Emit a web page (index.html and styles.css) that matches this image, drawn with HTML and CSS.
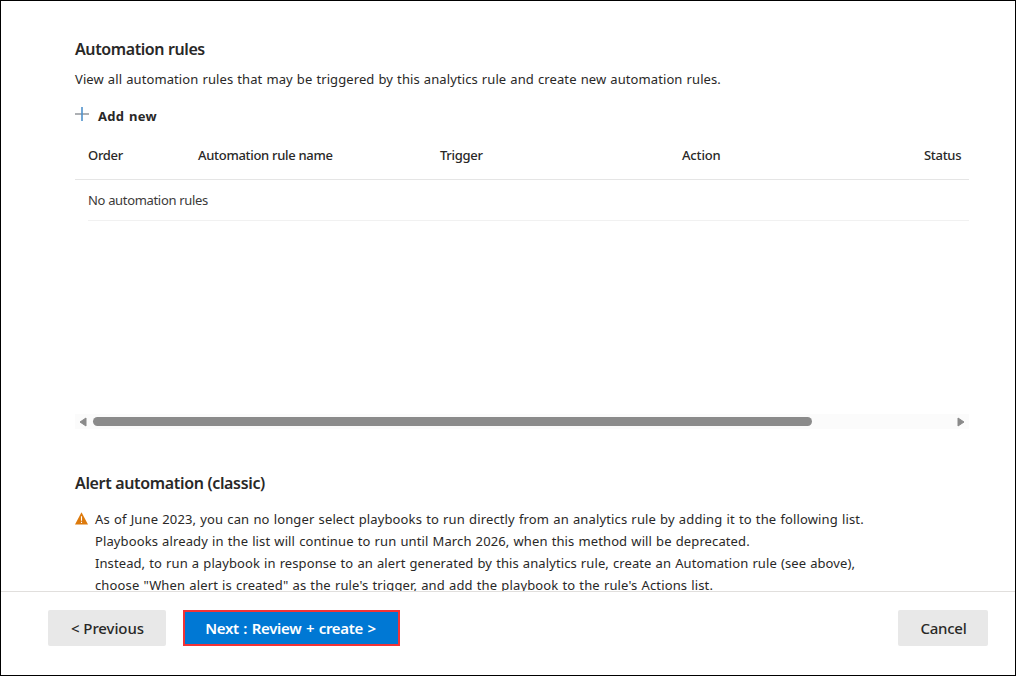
FILE: index.html
```html
<!DOCTYPE html>
<html lang="en">
<head>
<meta charset="utf-8">
<title>Automation rules</title>
<link rel="stylesheet" href="styles.css">
</head>
<body>
<div class="page">
  <main class="content">
    <h2 class="title"><span class="t-rules">Automation rules</span></h2>
    <p class="intro"><span>View all automation rules that may be triggered by this analytics rule and create new automation rules.</span></p>
    <button class="add">
      <svg class="plus" width="14" height="14" viewBox="0 0 14 14"><path d="M0 7h14" stroke="#999da2" stroke-width="1.6"/><path d="M7 0v14" stroke="#4f92cc" stroke-width="1.6"/></svg>
      <span class="add-label">Add new</span>
    </button>
    <section class="grid">
      <div class="head">
        <span>Order</span><span>Automation rule name</span><span>Trigger</span><span class="action">Action</span><span>Status</span>
      </div>
      <div class="empty"><span>No automation rules</span></div>
    </section>
    <div class="scrollbar">
      <svg width="8" height="10" viewBox="0 0 8 10"><path d="M7 1v8L1 5z" fill="#8a8a8a" stroke="#8a8a8a" stroke-linejoin="round"/></svg>
      <div class="track"><div class="thumb"></div></div>
      <svg width="8" height="10" viewBox="0 0 8 10"><path d="M1 1v8L7 5z" fill="#8a8a8a" stroke="#8a8a8a" stroke-linejoin="round"/></svg>
    </div>
    <h2 class="title classic">Alert automation (classic)</h2>
    <div class="notice">
      <svg class="warn" width="13" height="13" viewBox="0 0 13 13"><path d="M6.5 0.2L13 12.6H0z" fill="#dd7a0c"/><path d="M6.5 4.2v4.6M6.5 9.8v1.3" stroke="#fff" stroke-width="1.1"/></svg>
      <p class="lines"><span class="l1">As of June 2023, you can no longer select playbooks to run directly from an analytics rule by adding it to the following list.</span><span class="l2">Playbooks already in the list will continue to run until March 2026, when this method will be deprecated.</span><span class="l3">Instead, to run a playbook in response to an alert generated by this analytics rule, create an Automation rule (see above),</span><span class="l4">choose "When alert is created" as the rule's trigger, and add the playbook to the rule's Actions list.</span></p>
    </div>
  </main>
  <footer class="footer">
    <button class="btn previous">&lt; Previous</button>
    <button class="btn next">Next : Review + create &gt;</button>
    <button class="btn cancel">Cancel</button>
  </footer>
</div>
</body>
</html>
```

FILE: styles.css
```css
* { box-sizing: border-box; }
body { margin: 0; font: 13px/22px "Noto Sans", "Open Sans", sans-serif; color: #292827; }
.page { width: 1016px; height: 676px; border: 1px solid #000; background: #fff; display: flex; flex-direction: column; overflow: hidden; }
.content { height: 590px; flex: none; padding: 36px 46px 0 74px; overflow: hidden; white-space: nowrap; }
.title { margin: 0; font-size: 16px; line-height: 24px; font-weight: 600; letter-spacing: -0.4px; }
.intro { margin: 7px 0 0; letter-spacing: 0.09px; word-spacing: 0.6px; }
button { font-family: inherit; color: inherit; border: 0; margin: 0; padding: 0; background: none; }
.add { display: flex; height: 22px; margin-top: 15px; gap: 9px; }
.plus { margin-top: 2px; }
.add-label { font-size: 13px; line-height: 22px; font-weight: 700; letter-spacing: 0.3px; word-spacing: 1px; }
.grid { height: 287px; }
.head { display: grid; grid-template-columns: 110px 242px 242px 242px auto; padding: 17px 0 13px 13px; border-bottom: 1px solid #e5e5e5; font-weight: 500; height: 53px; letter-spacing: -0.3px; }
.action { letter-spacing: -0.15px; }
.empty { margin-left: 13px; height: 41px; padding-top: 9px; border-bottom: 1px solid #f1f1f1; letter-spacing: -0.33px; color: #3b3a39; }
.scrollbar { height: 15px; display: flex; align-items: center; padding: 0 4px; gap: 6px; background: #fbfbfb; }
.track { flex: 1; display: flex; align-items: center; }
.thumb { width: 719px; height: 9px; border-radius: 5px; background: #8b8b8b; }
.classic { margin-top: 42px; letter-spacing: -0.34px; }
.notice { display: flex; gap: 7px; margin-top: 13px; }
.warn { margin-top: 4px; flex: none; }
.lines { margin: 0; display: flex; flex-direction: column; word-spacing: 0.6px; }
.l1 { letter-spacing: 0.135px; }
.l2 { letter-spacing: 0.11px; }
.l3 { letter-spacing: 0.09px; }
.l4 { letter-spacing: 0.13px; }
.footer { flex: 1; border-top: 1px solid #e1dfdd; display: flex; align-items: flex-start; padding: 18px 27px 0 47px; }
.btn { height: 36px; font-size: 15px; font-weight: 500; background: #e8e8e8; border-radius: 2px; letter-spacing: -0.1px; }
.previous { width: 118px; padding-left: 1px; }
.next { width: 217px; margin-left: 17px; padding-right: 2px; background: #0078d4; color: #fff; border: 2px solid #f23336; border-radius: 0; font-weight: 600; letter-spacing: -0.3px; word-spacing: 0.9px; }
.cancel { width: 90px; margin-left: auto; padding-left: 1px; letter-spacing: -0.25px; }
```
